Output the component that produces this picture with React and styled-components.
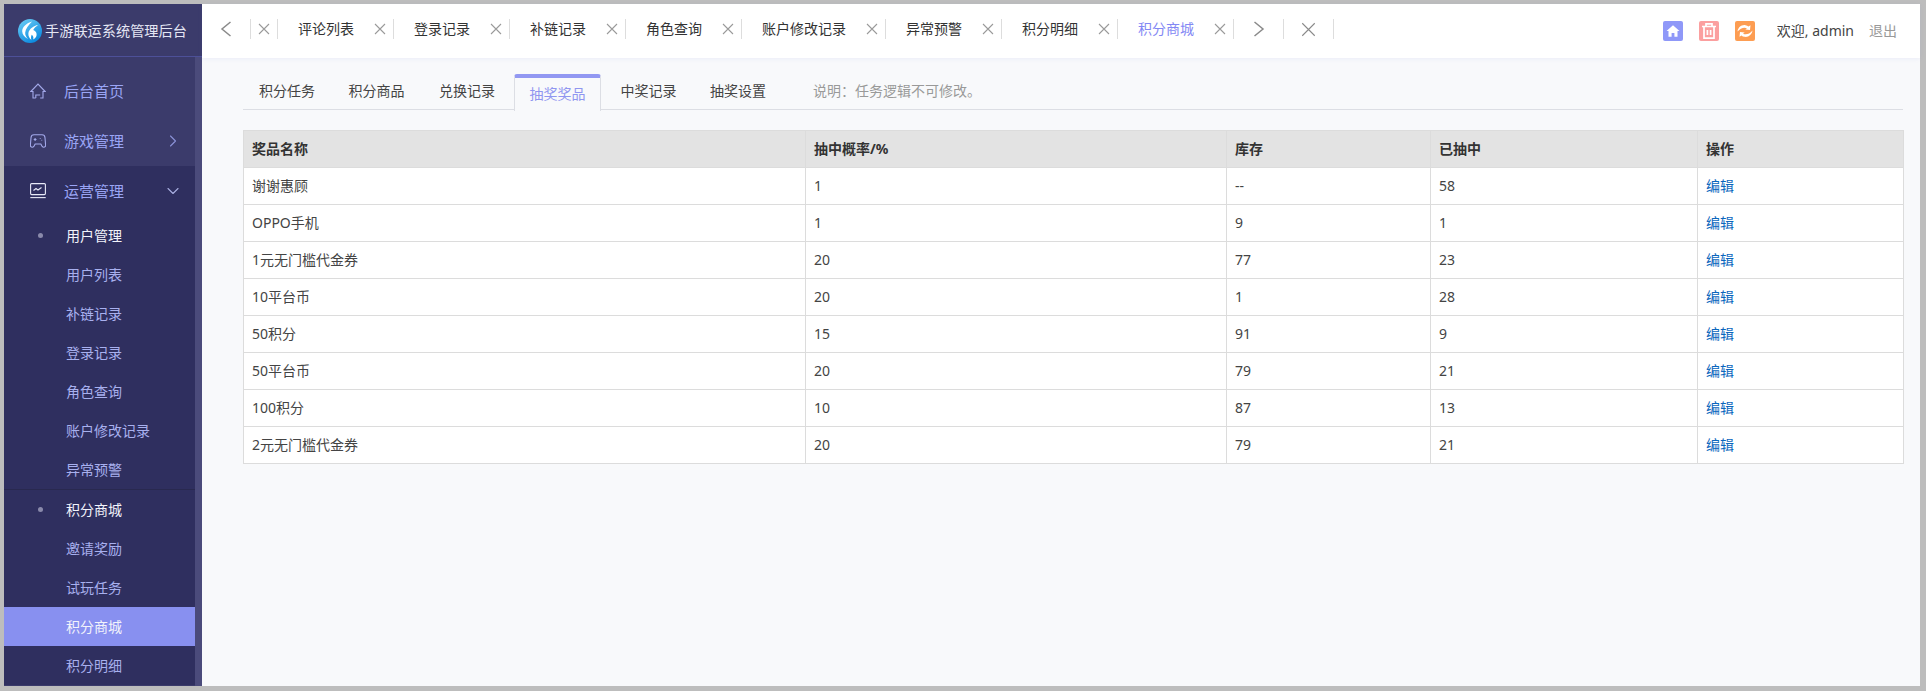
import React from 'react'
import styled, { createGlobalStyle } from 'styled-components'
import { ChevronRight, ChevronDown } from 'lucide-react'

const GlobalStyle = createGlobalStyle`
    html, body {
        margin: 0;
        height: 100%;
        overflow: hidden;
        background: #bdbdbd;
    }
    #root {
        height: 100%;
    }
    * {
        box-sizing: border-box;
    }
`

const openTabs = ['评论列表', '登录记录', '补链记录', '角色查询', '账户修改记录', '异常预警', '积分明细', '积分商城']
const pageTabs = [
    { name: '积分任务', width: 88 },
    { name: '积分商品', width: 91 },
    { name: '兑换记录', width: 90 },
    { name: '抽奖奖品', width: 87, active: true },
    { name: '中奖记录', width: 89 },
    { name: '抽奖设置', width: 90 },
]
const userLinks = ['用户列表', '补链记录', '登录记录', '角色查询', '账户修改记录', '异常预警']
const mallLinks = ['邀请奖励', '试玩任务', '积分商城', '积分明细']
const columns = [
    { name: '奖品名称', width: 562 },
    { name: '抽中概率/%', width: 421 },
    { name: '库存', width: 204 },
    { name: '已抽中', width: 267 },
    { name: '操作', width: 206 },
]
const prizes = [
    ['谢谢惠顾', '1', '--', '58'],
    ['OPPO手机', '1', '9', '1'],
    ['1元无门槛代金券', '20', '77', '23'],
    ['10平台币', '20', '1', '28'],
    ['50积分', '15', '91', '9'],
    ['50平台币', '20', '79', '21'],
    ['100积分', '10', '87', '13'],
    ['2元无门槛代金券', '20', '79', '21'],
]

const Logo = () => (
    <LogoSvg viewBox="0 0 24 24">
        <defs>
            <linearGradient id="logoFill" x1="0" y1="0" x2="0.6" y2="1">
                <stop offset="0" stopColor="#6fd0f6" />
                <stop offset="1" stopColor="#0d8be0" />
            </linearGradient>
        </defs>
        <circle cx="12" cy="12" r="12" fill="url(#logoFill)" />
        <path d="M14 2.500C8.500 4 4 8 4.200 12.500c.1 3.300 2.500 5.800 5.800 7.500-2-2.200-3-4.200-2.800-6.500C7.500 9.800 10.500 6 14 2.500z" fill="#fff" />
        <path d="M20 6c-4 .6-9 3.800-9.600 8.200-.3 2.600.8 4.800 3 6.800-.6-2-.5-3.800.4-5.200 1.500 1.200 1.900 2.800 1.400 4.700 2.800-1.600 4-4 3.200-6.600-.5-1.500-1.700-2.500-3.200-3C16 9.300 18 7.400 20 6z" fill="#fff" />
    </LogoSvg>
)

const HomeIcon = () => (
    <NavSvg viewBox="0 0 16 16">
        <path d="M5.800 15H3V8.500H.8L8 1l7.200 7.500H13V15h-2.800" />
        <path d="M5.800 15v-3h4.400" />
    </NavSvg>
)

const GameIcon = () => (
    <NavSvg viewBox="0 0 16 16">
        <path d="M4 1.800h8c1.700 0 2.900 1.200 3 2.900l.6 7.300c.1 1.400-.7 2.200-1.800 2.200-.8 0-1.300-.4-1.800-1.100L10.800 11H5.200L4 13.100c-.5.700-1 1.100-1.800 1.100-1.100 0-1.900-.8-1.800-2.200L1 4.700c.1-1.700 1.300-2.900 3-2.900z" />
        <path d="M3.700 6.500h2.800M5.100 5.100v2.800M9.800 5.500h.8M11.400 7.300h.8" />
    </NavSvg>
)

const ChartIcon = () => (
    <NavSvg viewBox="0 0 16 16" $bright>
        <rect x="0.600" y="0.600" width="14.800" height="11" rx="1" />
        <path d="M3.500 7.500l2.500-2 2 1.500 3.500-2.500" />
        <path d="M0.300 14.600h15.400" />
    </NavSvg>
)

// plain stroke icons for the tab strip, the packaged ones are too small and thin here
const CrossIcon = ({ size = 12, color = '#9a9a9a' }) => (
    <svg width={size} height={size} viewBox="0 0 12 12" fill="none" stroke={color} strokeWidth={12 / size + 0.1}>
        <path d="M1 1l10 10M11 1L1 11" />
    </svg>
)

const ArrowIcon = ({ left }) => (
    <svg width="12" height="16" viewBox="0 0 12 16" fill="none" stroke="#8a8a8a" strokeWidth="1.500">
        <path d={left ? 'M10.500 1L2 8l8.500 7' : 'M1.500 1L10 8l-8.500 7'} />
    </svg>
)

const App = () => {
    return (
        <Frame>
            <GlobalStyle />
            <Sidebar>
                <Brand>
                    <Logo />
                    <BrandName>手游联运系统管理后台</BrandName>
                </Brand>
                <SideBody>
                    <Menu>
                        <MenuSpacer />
                        <MenuItem>
                            <HomeIcon />
                            <MenuLabel>后台首页</MenuLabel>
                        </MenuItem>
                        <MenuItem>
                            <GameIcon />
                            <MenuLabel>游戏管理</MenuLabel>
                            <ChevronRight size={20} strokeWidth={1.3} color="#8b92d8" />
                        </MenuItem>
                        <SubMenu>
                            <MenuItem>
                                <ChartIcon />
                                <MenuLabel>运营管理</MenuLabel>
                                <ChevronDown size={20} strokeWidth={1.3} color="#a9aee0" />
                            </MenuItem>
                            <GroupTitle>用户管理</GroupTitle>
                            {userLinks.map(name => (
                                <SubLink key={name}>{name}</SubLink>
                            ))}
                            <Divider />
                            <GroupTitle>积分商城</GroupTitle>
                            {mallLinks.map((name, i) => (
                                <SubLink key={name} $active={i === 2}>
                                    {name}
                                </SubLink>
                            ))}
                        </SubMenu>
                    </Menu>
                    <ScrollTrack />
                </SideBody>
            </Sidebar>
            <Main>
                <TopBar>
                    <NavCell $width={49}>
                        <ArrowIcon left />
                    </NavCell>
                    <NavCell $width={27}>
                        <CrossIcon />
                    </NavCell>
                    {openTabs.map((name, i) => (
                        <OpenTab key={name}>
                            <OpenTabName $active={i === openTabs.length - 1}>{name}</OpenTabName>
                            <CrossIcon />
                        </OpenTab>
                    ))}
                    <NavCell $width={50}>
                        <ArrowIcon />
                    </NavCell>
                    <NavCell $width={50}>
                        <CrossIcon size={15} color="#8a8a8a" />
                    </NavCell>
                    <TopRight>
                        <ToolButton $color="#8f98f8">
                            <svg width="14" height="14" viewBox="0 0 14 14">
                                <path d="M7 1.200L13.500 7h-2v5.800H8.400V9H5.600v3.800H2.500V7h-2z" fill="#fff" />
                            </svg>
                        </ToolButton>
                        <ToolButton $color="#fb9f9f">
                            <svg width="20" height="20" viewBox="0 0 20 20">
                                <path d="M3 5.500h14M7 5V2.800h6V5M5 6v11.200h10V6M8.400 9v5M11.600 9v5" fill="none" stroke="#fff" strokeWidth="1.700" />
                            </svg>
                        </ToolButton>
                        <ToolButton $color="#fd9d52">
                            <svg width="20" height="20" viewBox="0 0 20 20">
                                <path d="M2.500 10.500C3 6.500 6.500 3.500 10.500 4.200c1.200.2 2.200.7 3 1.400L15.500 4.200 15 9l-4.700-.4 1.700-1.400C9 5.800 5.500 7 2.500 10.500z" fill="#fff" />
                                <path d="M17.500 9.500C17 13.500 13.500 16.500 9.500 15.800c-1.200-.2-2.200-.7-3-1.400L4.500 15.800 5 11l4.700.4-1.700 1.400c3 1.400 6.500.2 9.500-3.300z" fill="#fff" />
                            </svg>
                        </ToolButton>
                        <Welcome>欢迎, admin</Welcome>
                        <Logout>退出</Logout>
                    </TopRight>
                </TopBar>
                <Content>
                    <PageTabs>
                        {pageTabs.map(tab => (
                            <PageTab key={tab.name} $width={tab.width} $active={tab.active}>
                                {tab.name}
                            </PageTab>
                        ))}
                        <Note>说明：任务逻辑不可修改。</Note>
                    </PageTabs>
                    <PrizeTable>
                        <thead>
                            <tr>
                                {columns.map(col => (
                                    <HeadCell key={col.name} $width={col.width}>
                                        {col.name}
                                    </HeadCell>
                                ))}
                            </tr>
                        </thead>
                        <tbody>
                            {prizes.map((row, i) => (
                                <tr key={i}>
                                    {row.map((value, j) => (
                                        <Cell key={j}>{value}</Cell>
                                    ))}
                                    <Cell>
                                        <EditLink>编辑</EditLink>
                                    </Cell>
                                </tr>
                            ))}
                        </tbody>
                    </PrizeTable>
                </Content>
            </Main>
        </Frame>
    )
}

const Frame = styled.div`
    display: flex;
    height: 100%;
    padding: 4px 6px 5px 4px;
    font-family: "Noto Sans", "Noto Sans CJK SC", sans-serif;
    font-size: 14px;
    color: #333;
`
const Sidebar = styled.div`
    display: flex;
    flex-direction: column;
    flex: 0 0 198px;
    background: #3b3b6b;
    overflow: hidden;
`
const Brand = styled.div`
    display: flex;
    align-items: center;
    flex: 0 0 53px;
    padding: 1px 0 0 14px;
    border-bottom: 1px solid #4d5098;
`
const LogoSvg = styled.svg`
    width: 24px;
    height: 24px;
    flex: none;
`
const BrandName = styled.span`
    margin-left: 3px;
    padding-bottom: 1px;
    font-size: 14.200px;
    white-space: nowrap;
    color: #e4e6f4;
`
const SideBody = styled.div`
    display: flex;
    flex: 1;
    min-height: 0;
`
const Menu = styled.div`
    flex: 1;
    min-width: 0;
`
const MenuSpacer = styled.div`
    height: 9px;
`
const MenuItem = styled.div`
    display: flex;
    align-items: center;
    height: 50px;
    padding: 0 12px 0 26px;
`
const NavSvg = styled.svg`
    width: 16px;
    height: 16px;
    flex: none;
    fill: none;
    stroke: ${props => (props.$bright ? '#e8eaf8' : '#a3a9ea')};
    stroke-width: 1.1;
`
const MenuLabel = styled.span`
    flex: 1;
    margin-left: 18px;
    padding-bottom: 2px;
    font-size: 15px;
    color: #9aa5f5;
`
const SubMenu = styled.div`
    background: #2f2f5f;
`
const GroupTitle = styled.div`
    position: relative;
    height: 39px;
    padding-left: 62px;
    line-height: 39px;
    color: #f2f3fb;

    &::before {
        content: '';
        position: absolute;
        left: 34px;
        top: 17px;
        width: 5px;
        height: 5px;
        border-radius: 50%;
        background: #8a8aab;
    }
`
const SubLink = styled.div`
    height: 39px;
    padding-left: 62px;
    line-height: 39px;
    background: ${props => (props.$active ? '#8890f0' : 'transparent')};
    color: ${props => (props.$active ? '#f2f3fb' : '#a8b0ee')};
`
const Divider = styled.div`
    height: 0;
    border-top: 1px solid #29294f;
`
const ScrollTrack = styled.div`
    flex: 0 0 7px;
    background: #4b4b7b;
`
const Main = styled.div`
    display: flex;
    flex-direction: column;
    flex: 1;
    min-width: 0;
    background: #f8f9fb;
`
const TopBar = styled.div`
    display: flex;
    align-items: center;
    flex: 0 0 54px;
    padding-bottom: 4px;
    background: #fff;
    box-shadow: 0 1px 4px rgba(120, 130, 220, 0.1);
`
const NavCell = styled.div`
    display: flex;
    align-items: center;
    justify-content: center;
    flex: 0 0 ${props => props.$width}px;
    height: 20px;
    border-right: 1px solid #ddd;
`
const OpenTab = styled.div`
    display: flex;
    align-items: center;
    flex: none;
    height: 20px;
    padding: 0 7px 0 20px;
    border-right: 1px solid #ddd;
    white-space: nowrap;
`
const OpenTabName = styled.span`
    margin-right: 20px;
    padding-bottom: 2px;
    color: ${props => (props.$active ? '#8388f4' : '#333')};
`
const TopRight = styled.div`
    display: flex;
    align-items: center;
    margin-left: auto;
    padding: 4px 23px 0 0;
`
const ToolButton = styled.div`
    display: flex;
    align-items: center;
    justify-content: center;
    width: 20px;
    height: 20px;
    margin-right: 16px;
    border-radius: 2px;
    background: ${props => props.$color};
`
const Welcome = styled.span`
    margin-left: 6px;
    padding-bottom: 2px;
    color: #444;
`
const Logout = styled.span`
    margin-left: 15px;
    padding-bottom: 2px;
    color: #999;
`
const Content = styled.div`
    flex: 1;
    padding: 16px 17px 0 41px;
`
const PageTabs = styled.div`
    display: flex;
    height: 36px;
    border-bottom: 1px solid #dcdee4;
`
const PageTab = styled.div`
    flex: 0 0 ${props => props.$width}px;
    text-align: center;
    color: #444;
    line-height: 34px;
    ${props => props.$active && `
        height: 37px;
        margin: 0 3px 0 2px;
        border: 1px solid #dcdee4;
        border-top: 4px solid #9298f2;
        border-bottom: 0;
        border-radius: 3px 3px 0 0;
        background: #f8f9fb;
        color: #9096f0;
        line-height: 31px;
    `}
`
const Note = styled.span`
    margin-left: 30px;
    line-height: 34px;
    color: #999;
`
const PrizeTable = styled.table`
    width: 1660px;
    margin-top: 20px;
    table-layout: fixed;
    border-collapse: collapse;
    background: #fff;
`
const HeadCell = styled.th`
    width: ${props => props.$width}px;
    height: 37px;
    padding: 0 8px 2px;
    border: 1px solid #dcdcdc;
    background: #e3e3e3;
    text-align: left;
    font-weight: 700;
    font-size: 14px;
    color: #333;
`
const Cell = styled.td`
    height: 37px;
    padding: 0 8px 2px;
    border: 1px solid #dcdcdc;
    color: #444;
`
const EditLink = styled.a`
    color: #0a66bd;
`

export default App
